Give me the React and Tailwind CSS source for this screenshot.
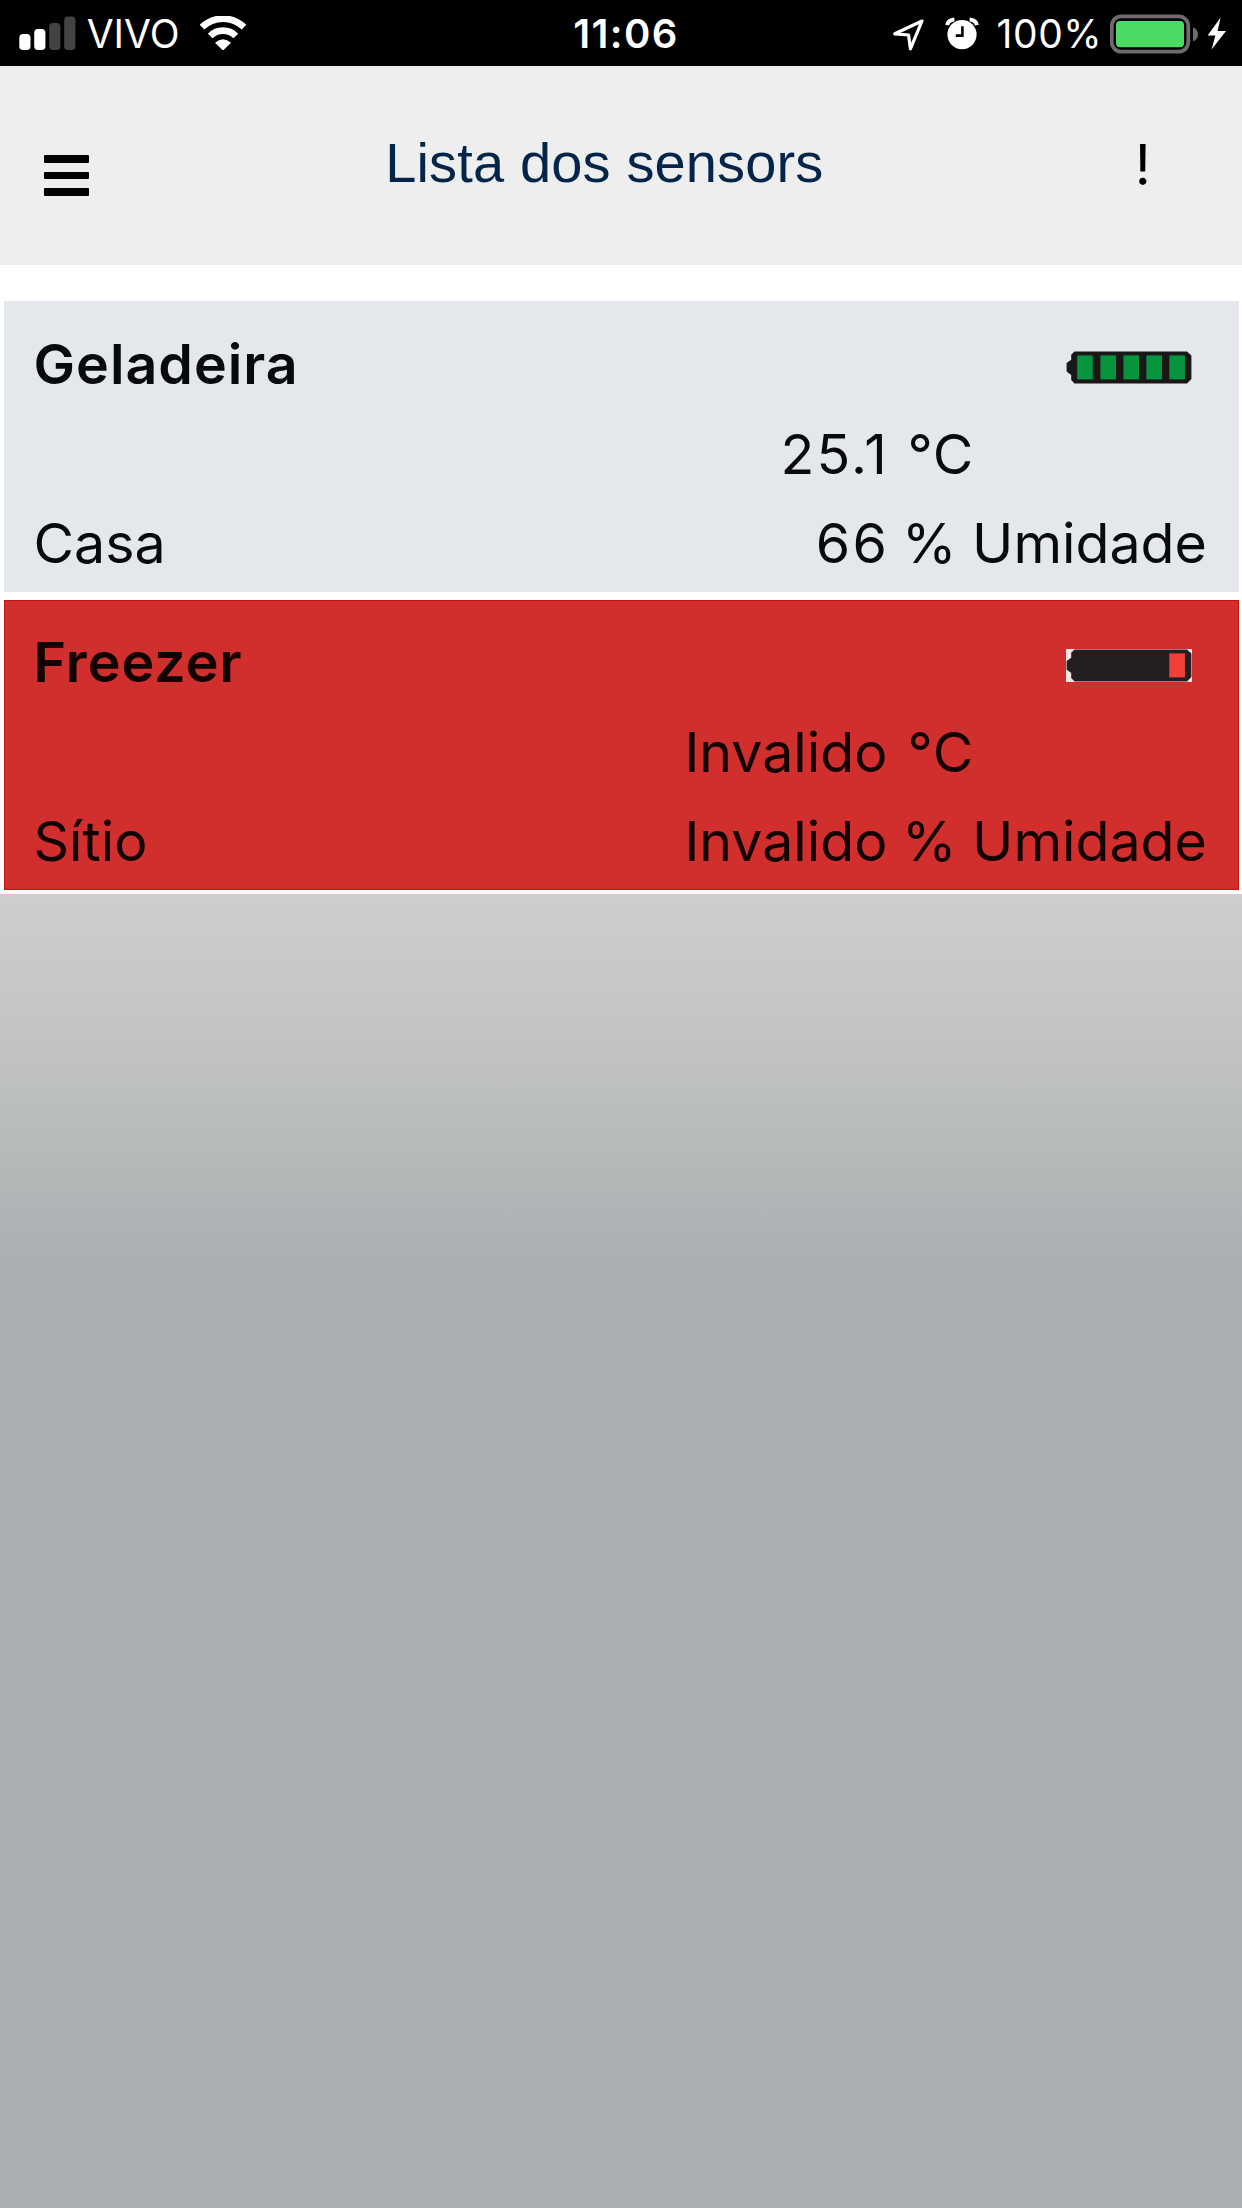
const sensors = [
  {
    name: 'Geladeira',
    place: 'Casa',
    temperature: '25.1',
    humidity: '66',
    battery: 5,
    alert: false,
  },
  {
    name: 'Freezer',
    place: 'Sítio',
    temperature: 'Invalido',
    humidity: 'Invalido',
    battery: 1,
    alert: true,
  },
]

const cells = [11.2, 34.4, 57.5, 80.4, 103.3]

function SignalIcon() {
  return (
    <svg width="57" height="36" viewBox="0 0 57 36" className="shrink-0">
      <rect x="0.3" y="18" width="11.2" height="16" rx="3.8" fill="#fff" />
      <rect x="15.2" y="13" width="11.2" height="21" rx="3.8" fill="#fff" />
      <rect x="30.2" y="7" width="11.2" height="27" rx="3.8" fill="#434343" />
      <rect x="45.2" y="0.5" width="11.2" height="33.5" rx="3.8" fill="#434343" />
    </svg>
  )
}

function WifiIcon() {
  return (
    <svg width="48" height="36" viewBox="0 0 48 36" fill="none" stroke="#fff" className="shrink-0">
      <path d="M3 11.2 A30 30 0 0 1 45 11.2" strokeWidth="6.6" />
      <path d="M11.2 20 A18 18 0 0 1 36.8 20" strokeWidth="6.6" />
      <path d="M16 26.8 Q24 19.8 32 26.8 L24.8 33.7 Q24 34.4 23.2 33.7 Z" fill="#fff" stroke="none" />
    </svg>
  )
}

function LocationIcon() {
  return (
    <svg width="32" height="34" viewBox="0 0 32 34" fill="none" stroke="#fff" strokeWidth="3.2" strokeLinejoin="round" className="shrink-0">
      <path d="M29 4 L1.8 16.8 L15.6 18 L17.4 31.8 Z" />
    </svg>
  )
}

function AlarmIcon() {
  return (
    <svg width="34" height="34" viewBox="0 0 34 34" className="shrink-0">
      <circle cx="17" cy="17.6" r="14.6" fill="#fff" />
      <path d="M2.2 8.2 Q3.2 3 9.4 2.6" fill="none" stroke="#fff" strokeWidth="4" />
      <path d="M31.8 8.2 Q30.8 3 24.6 2.6" fill="none" stroke="#fff" strokeWidth="4" />
      <path d="M17.4 9.2 V18.6 H10.8" fill="none" stroke="#000" strokeWidth="2.6" />
    </svg>
  )
}

function PhoneBatteryIcon() {
  return (
    <svg width="89" height="40" viewBox="0 0 89 40" className="shrink-0">
      <rect x="1.7" y="2.4" width="76.6" height="35.2" rx="9.5" fill="none" stroke="#6d6b70" strokeWidth="3.8" />
      <rect x="6" y="7" width="68" height="26.3" rx="4" fill="#4cd964" />
      <path d="M83 13.2 Q88 15.6 88 20.4 Q88 25 83 27.6 Z" fill="#6d6b70" />
    </svg>
  )
}

function BoltIcon() {
  return (
    <svg width="20" height="34" viewBox="0 0 20 34" className="shrink-0">
      <path d="M13.6 0.6 L0.6 18.6 H8.4 L4.6 32.6 L19 14 H10.6 Z" fill="#fff" />
    </svg>
  )
}

function StatusBar() {
  return (
    <div className="grid h-[66px] grid-cols-[573.2px_107px_1fr] bg-black leading-[66px] text-white">
      <div className="flex items-center pl-[18.7px]">
        <SignalIcon />
        <span className="mt-px ml-[11px] text-[39px]">VIVO</span>
        <span className="ml-[19.5px]">
          <WifiIcon />
        </span>
      </div>
      <span className="mt-px text-[40px] font-semibold tracking-[1.4px]">11:06</span>
      <div className="flex items-center justify-end pr-[15.5px]">
        <LocationIcon />
        <span className="ml-5">
          <AlarmIcon />
        </span>
        <span className="ml-[17.5px] mt-px w-[113px] text-[39px] tracking-[0.6px]">100%</span>
        <PhoneBatteryIcon />
        <span className="ml-2">
          <BoltIcon />
        </span>
      </div>
    </div>
  )
}

function Header() {
  return (
    <header className="flex h-[198.5px] bg-[#eeeeee] pl-[43.7px]">
      <button className="mt-[89px] flex h-[40.5px] w-[45px] flex-col justify-between">
        <span className="h-[7.5px] w-full rounded-[1px] bg-black" />
        <span className="h-[7.5px] w-full rounded-[1px] bg-black" />
        <span className="h-[7.5px] w-full rounded-[1px] bg-black" />
      </button>
      <h1 className="ml-[296.5px] w-[749.5px] whitespace-nowrap font-['Liberation_Sans',Arial,sans-serif] text-[56px] leading-[194px] tracking-[0.15px] text-[#04254a]">
        Lista dos sensors
      </h1>
      <span className="text-[56px] leading-[198px] text-black">!</span>
    </header>
  )
}

function SensorBattery({ level }) {
  const low = level <= 1
  return (
    <svg width="126" height="33" viewBox="0 0 126 33">
      {low && <rect width="126" height="33" fill="#f3e6e6" />}
      <path
        d="M8.5 0.4 H121 L125.4 4.6 V28 L121 32.4 H8.5 L5.2 29 V24 L0.6 20.5 V12 L5.2 8.8 V3.8 Z"
        fill={low ? '#231f20' : '#1a1719'}
      />
      {cells.slice(cells.length - level).map((x) => (
        <rect key={x} x={x} y="4.4" width="15.6" height="24" fill={low ? '#f04037' : '#06943f'} />
      ))}
    </svg>
  )
}

function Reading({ value, unit, unitClass }) {
  const numeric = !isNaN(Number(value))
  return (
    <>
      <span className={numeric ? '-mr-[1.6px] text-right tracking-[2.2px]' : 'text-right'}>{value}</span>
      <span className={unitClass}>{unit}</span>
    </>
  )
}

function SensorCard({ sensor }) {
  return (
    <li
      className={
        sensor.alert
          ? 'h-[290px] border border-[#c41216] bg-[#d02f2d] px-[29px] pt-[16.4px] text-[#120202]'
          : 'h-[291px] bg-[#e4e7ec] px-[30px] pt-[18.4px] text-[#08090a]'
      }
    >
      <div className="grid auto-rows-[89.4px] grid-cols-[300px_554px_1fr] text-[55.5px] leading-[89.4px] tracking-normal whitespace-nowrap">
        <span className="col-span-2 font-semibold tracking-[1px]">{sensor.name}</span>
        <span className="flex justify-end pt-[31.3px] pr-[17px]">
          <SensorBattery level={sensor.battery} />
        </span>
        <span />
        <Reading value={sensor.temperature} unit="°C" unitClass="pl-[20px] tracking-[0.5px]" />
        <span>{sensor.place}</span>
        <Reading value={sensor.humidity} unit="% Umidade" unitClass="pl-[14.5px]" />
      </div>
    </li>
  )
}

function App() {
  return (
    <div className="flex h-[2208px] w-[1242px] flex-col overflow-hidden bg-[#aaaeb1] font-['Inter',sans-serif]">
      <StatusBar />
      <Header />
      <ul className="flex flex-col gap-2 bg-white pt-[36.5px] pr-[3.5px] pb-1 pl-[3.5px]">
        {sensors.map((sensor) => (
          <SensorCard key={sensor.name} sensor={sensor} />
        ))}
      </ul>
      <div className="h-[384px] bg-[linear-gradient(#cdcecf_0%,#c1c2c3_42%,#babdbd_58%,#b1b6b7_77%,#aaaeb1_100%)]" />
    </div>
  )
}

export default App
